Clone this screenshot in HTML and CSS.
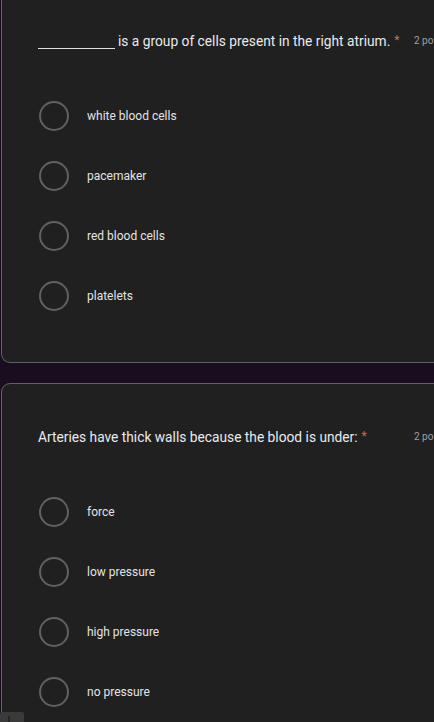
FILE: index.html
```html
<!DOCTYPE html>
<html>
<head>
<meta charset="utf-8">
<link rel="stylesheet" href="styles.css">
</head>
<body>
<div class="page">
  <div class="card card--cut">
    <div class="q-head">
      <div class="q-title"><span class="blank"></span>is a group of cells present in the right atrium.<span class="req">*</span></div>
      <div class="q-points">2 points</div>
    </div>
    <div class="options">
      <div class="opt"><span class="radio"></span><span class="opt-label">white blood cells</span></div>
      <div class="opt"><span class="radio"></span><span class="opt-label">pacemaker</span></div>
      <div class="opt"><span class="radio"></span><span class="opt-label">red blood cells</span></div>
      <div class="opt"><span class="radio"></span><span class="opt-label">platelets</span></div>
    </div>
  </div>
  <div class="card">
    <div class="q-head">
      <div class="q-title">Arteries have thick walls because the blood is under:<span class="req">*</span></div>
      <div class="q-points">2 points</div>
    </div>
    <div class="options">
      <div class="opt"><span class="radio"></span><span class="opt-label">force</span></div>
      <div class="opt"><span class="radio"></span><span class="opt-label">low pressure</span></div>
      <div class="opt"><span class="radio"></span><span class="opt-label">high pressure</span></div>
      <div class="opt"><span class="radio"></span><span class="opt-label">no pressure</span></div>
    </div>
  </div>
</div>
<div class="fab"><span class="fab-mark"></span></div>
</body>
</html>
```

FILE: styles.css
```css
html, body {
  margin: 0;
  padding: 0;
  background: #1b0d20;
  overflow: hidden;
  height: 722px;
}
body {
  font-family: Roboto, "Liberation Sans", sans-serif;
  color: #e8eaed;
}
.page {
  display: flex;
  flex-direction: column;
  gap: 20px;
  padding-left: 1px;
}
.card {
  width: 486px;
  box-sizing: border-box;
  background: #202020;
  border: 1px solid #5f6166;
  border-radius: 9px;
  padding: 42px 36px 36px 36px;
  flex-shrink: 0;
}
.card--cut {
  border-top: none;
  border-radius: 0 0 9px 9px;
  padding-top: 30px;
}
.q-head {
  display: flex;
  align-items: center;
  height: 20px;
}
.q-title {
  flex: 1;
  font-size: 13.75px;
  line-height: 20px;
  color: #e8eaed;
  white-space: nowrap;
}
.blank {
  display: inline-block;
  width: 77px;
  height: 1px;
  background: #e0e0e0;
  margin-right: 3px;
  vertical-align: -3px;
}
.req {
  color: #d9645f;
  margin-left: 4px;
  font-size: 12px;
  vertical-align: 2px;
}
.q-points {
  font-size: 10px;
  color: #9aa0a6;
  width: 36px;
  white-space: nowrap;
}
.options {
  margin-top: 36px;
  display: flex;
  flex-direction: column;
  padding-left: 1px;
}
.opt {
  height: 60px;
  display: flex;
  align-items: center;
  gap: 18px;
}
.radio {
  width: 30px;
  height: 30px;
  box-sizing: border-box;
  border: 2px solid #5f6165;
  border-radius: 50%;
  flex-shrink: 0;
}
.opt-label {
  font-size: 12px;
  color: #e3e3e3;
}
.fab {
  position: absolute;
  left: 0;
  top: 712px;
  width: 24px;
  height: 20px;
  background: #3a3a3a;
  border-radius: 2px 2px 0 0;
}
.fab-mark {
  position: absolute;
  left: 8px;
  top: 4px;
  width: 2px;
  height: 8px;
  background: #262626;
}
```
